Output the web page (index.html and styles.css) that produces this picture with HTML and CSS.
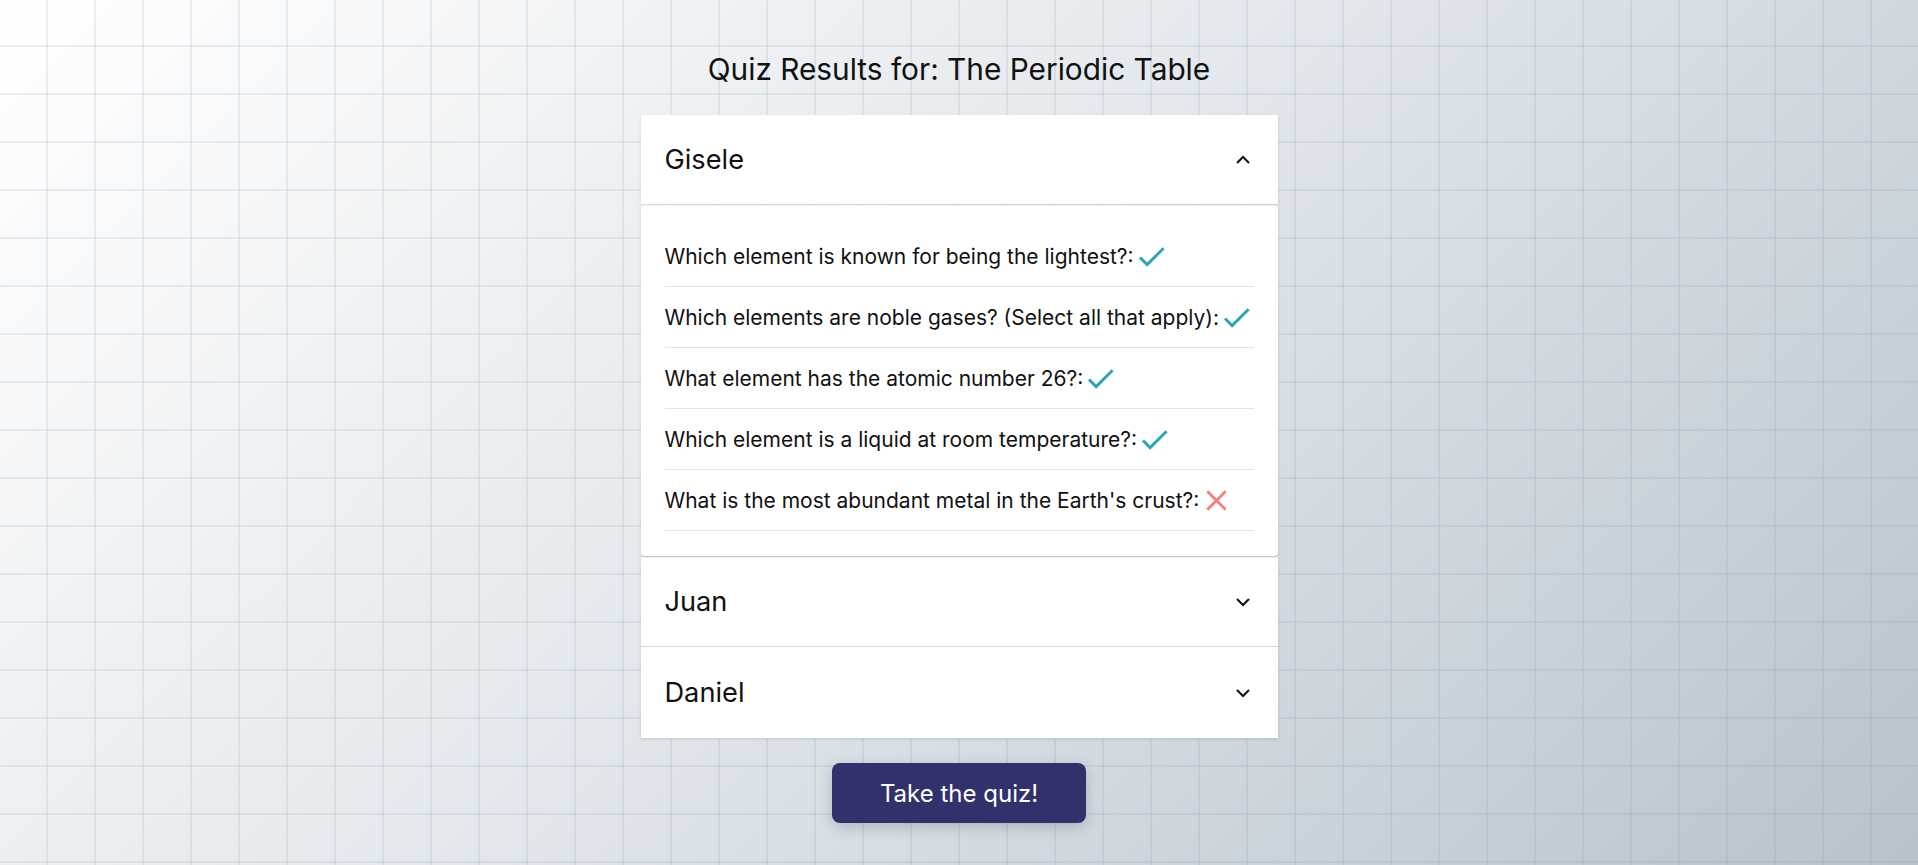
FILE: index.html
```html
<!DOCTYPE html>
<html lang="en">
<head>
<meta charset="utf-8">
<title>Quiz Results</title>
<link rel="stylesheet" href="styles.css">
</head>
<body>
<main class="page">
  <h1 class="title">Quiz Results for: The Periodic Table</h1>
  <section class="accordion">
    <div class="acc-header acc-header--open">
      <span class="acc-name">Gisele</span>
      <svg class="chev" viewBox="0 0 24 24" width="24" height="24"><polyline points="6 15 12 9 18 15"/></svg>
    </div>
    <div class="acc-panel">
      <div class="q-row"><span class="q-text">Which element is known for being the lightest?:</span><svg class="mark ok" viewBox="0 0 24 24"><path d="M9 16.17 4.83 12l-1.42 1.41L9 19 21 7l-1.41-1.41z"/></svg></div>
      <div class="q-row"><span class="q-text">Which elements are noble gases? (Select all that apply):</span><svg class="mark ok" viewBox="0 0 24 24"><path d="M9 16.17 4.83 12l-1.42 1.41L9 19 21 7l-1.41-1.41z"/></svg></div>
      <div class="q-row"><span class="q-text">What element has the atomic number 26?:</span><svg class="mark ok" viewBox="0 0 24 24"><path d="M9 16.17 4.83 12l-1.42 1.41L9 19 21 7l-1.41-1.41z"/></svg></div>
      <div class="q-row"><span class="q-text">Which element is a liquid at room temperature?:</span><svg class="mark ok" viewBox="0 0 24 24"><path d="M9 16.17 4.83 12l-1.42 1.41L9 19 21 7l-1.41-1.41z"/></svg></div>
      <div class="q-row"><span class="q-text">What is the most abundant metal in the Earth's crust?:</span><svg class="mark bad" viewBox="0 0 24 24"><path d="M19 6.41 17.59 5 12 10.59 6.41 5 5 6.41 10.59 12 5 17.59 6.41 19 12 13.41 17.59 19 19 17.59 13.41 12z"/></svg></div>
    </div>
    <div class="acc-header acc-header--closed">
      <span class="acc-name">Juan</span>
      <svg class="chev" viewBox="0 0 24 24" width="24" height="24"><polyline points="6 9 12 15 18 9"/></svg>
    </div>
    <div class="acc-header acc-header--closed acc-header--last">
      <span class="acc-name">Daniel</span>
      <svg class="chev" viewBox="0 0 24 24" width="24" height="24"><polyline points="6 9 12 15 18 9"/></svg>
    </div>
  </section>
  <div class="actions">
    <button class="btn-primary" type="button">Take the quiz!</button>
  </div>
</main>
</body>
</html>
```
FILE: styles.css
```css
* { box-sizing: border-box; }

html, body {
  margin: 0;
  padding: 0;
}

body {
  min-height: 100vh;
  font-family: Inter, "Noto Sans", "Liberation Sans", sans-serif;
  color: #111;
  background-color: #dfe5ea;
  background-image:
    linear-gradient(to right, transparent 46px, rgba(110, 125, 155, 0.12) 46px, rgba(110, 125, 155, 0.12) 48px),
    linear-gradient(to bottom, transparent 46px, rgba(110, 125, 155, 0.12) 46px, rgba(110, 125, 155, 0.12) 48px),
    linear-gradient(135deg, #ffffff 0%, #e4e9ed 45%, #b6c3cd 100%);
  background-size: 48px 48px, 48px 48px, 100% 100%;
  background-position: 0 0, 0 -1px, 0 0;
}

.page {
  display: flex;
  flex-direction: column;
  align-items: center;
}

.title {
  margin: 51px 0 28px;
  font-size: 29.8px;
  line-height: 36px;
  font-weight: 400;
  color: #111;
}

.accordion {
  width: 637px;
  display: flex;
  flex-direction: column;
}

.acc-header {
  display: flex;
  align-items: center;
  justify-content: space-between;
  padding: 0 23px 0 24px;
  background: #fff;
  box-shadow: 0 1px 3px rgba(0, 0, 0, 0.12);
}

.acc-header--open {
  height: 89px;
  position: relative;
  z-index: 1;
}

.acc-header--closed {
  height: 90px;
  border-top: 1px solid #d6d9df;
}

.acc-header--last {
  height: 92px;
}

.acc-name {
  font-size: 27.2px;
  font-weight: 400;
  color: #111;
}

.chev {
  display: block;
  fill: none;
  stroke: #111;
  stroke-width: 2;
}

.acc-panel {
  margin-top: 1px;
  background: #fff;
  border-radius: 4px;
  padding: 21px 24px 25px;
  box-shadow: 0 1px 3px rgba(0, 0, 0, 0.14);
  position: relative;
}

.q-row {
  height: 61px;
  display: flex;
  align-items: center;
  border-bottom: 1px solid #e3e4e8;
}

.q-text {
  font-size: 21px;
  color: #111;
  white-space: nowrap;
  flex: none;
}

.mark {
  width: 35px;
  height: 35px;
  flex: none;
  display: block;
}

.mark.ok { fill: #2ba4b4; }
.mark.bad { fill: #f28080; }

.actions {
  margin-top: 25px;
}

.btn-primary {
  height: 60px;
  padding: 0 48px;
  border: none;
  border-radius: 8px;
  background: #31316b;
  color: #fff;
  font-family: Inter, "Noto Sans", "Liberation Sans", sans-serif;
  font-size: 24px;
  font-weight: 400;
  box-shadow: 0 4px 14px rgba(30, 40, 70, 0.22);
  cursor: pointer;
}
```
